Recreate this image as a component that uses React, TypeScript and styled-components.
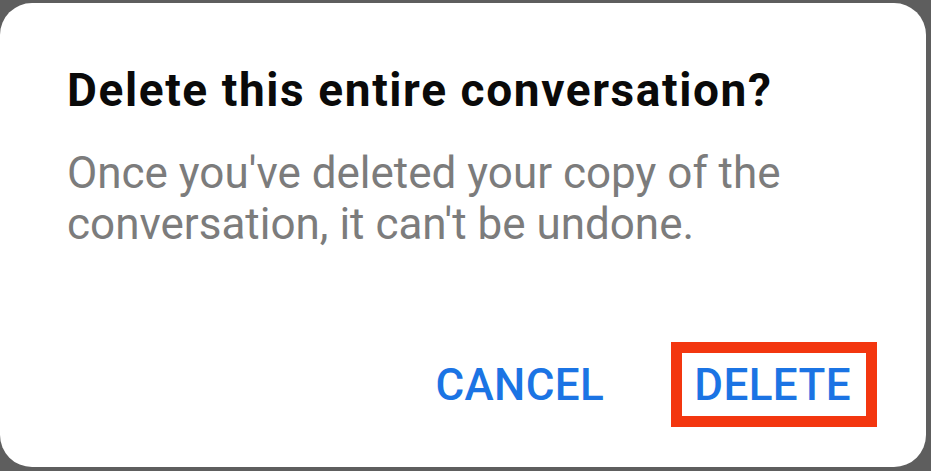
import React from "react";
import styled, { createGlobalStyle } from "styled-components";

const Global = createGlobalStyle`
  html, body { margin: 0; padding: 0; background: #5e5e5e; }
  body { font-family: Roboto, "Noto Sans", Arial, sans-serif; }
`;

const Backdrop = styled.div`
  width: 931px;
  height: 471px;
  box-sizing: border-box;
  padding: 3px 5px 4px 0;
  background: #5e5e5e;
`;

const Card = styled.div`
  height: 100%;
  box-sizing: border-box;
  background: #ffffff;
  border-radius: 32px;
  padding: 63px 49px 40px 67px;
  display: flex;
  flex-direction: column;
`;

const Title = styled.h1`
  margin: 0;
  font-family: Roboto, sans-serif;
  font-weight: 700;
  font-size: 46px;
  line-height: 48px;
  letter-spacing: 1.6px;
  color: #0a0a0a;
  white-space: nowrap;
`;

const Message = styled.p`
  margin: 34px 0 0 0;
  font-family: Roboto, sans-serif;
  font-weight: 400;
  font-size: 44px;
  line-height: 51px;
  color: #7c7c7c;
  white-space: nowrap;
`;

const Actions = styled.div`
  margin-top: auto;
  display: flex;
  justify-content: flex-end;
  align-items: center;
  gap: 67px;
`;

const ActionButton = styled.button<{ $highlighted?: boolean }>`
  border: ${(p) => (p.$highlighted ? "11px solid #f3360f" : "none")};
  background: transparent;
  padding: ${(p) => (p.$highlighted ? "0 15px 0 12px" : "0")};
  height: 85px;
  font-family: Roboto, sans-serif;
  font-weight: 500;
  font-size: 44px;
  letter-spacing: 0.4px;
  color: #1b74e4;
  cursor: pointer;
`;

export default function App() {
  return (
    <>
      <Global />
      <Backdrop>
        <Card>
          <Title>Delete this entire conversation?</Title>
          <Message>
            Once you've deleted your copy of the
            <br />
            conversation, it can't be undone.
          </Message>
          <Actions>
            <ActionButton>CANCEL</ActionButton>
            <ActionButton $highlighted>DELETE</ActionButton>
          </Actions>
        </Card>
      </Backdrop>
    </>
  );
}
